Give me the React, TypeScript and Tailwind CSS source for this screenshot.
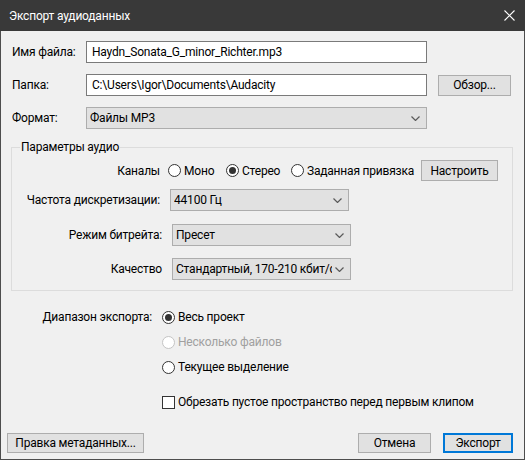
import React from "react";

const font = { fontFamily: 'Roboto, "Noto Sans", sans-serif' };

function Chevron() {
  return (
    <svg width="9" height="5" viewBox="0 0 9 5" className="shrink-0">
      <path d="M0.5 0.5 L4.5 4.5 L8.5 0.5" fill="none" stroke="#5a5a5a" strokeWidth="1.2" />
    </svg>
  );
}

function Radio({ checked, disabled, label }: { checked?: boolean; disabled?: boolean; label: string }) {
  return (
    <div className="flex items-center h-[20px]">
      <div
        className={`w-[13px] h-[13px] rounded-full border bg-white flex items-center justify-center shrink-0 ${
          disabled ? "border-[#c4c4c4]" : "border-[#333333]"
        }`}
      >
        {checked && <div className="w-[7px] h-[7px] rounded-full bg-[#333333]" />}
      </div>
      <span className={`ml-[3px] whitespace-nowrap ${disabled ? "text-[#a0a0a0]" : "text-black"}`}>{label}</span>
    </div>
  );
}

function Select({ value, w, ml }: { value: string; w: string; ml?: string }) {
  return (
    <div className={`${w} ${ml ?? ""} h-[22px] border border-[#adadad] bg-[#e1e1e1] flex items-center pl-[3px] pr-[6px] shrink-0`}>
      <span className="flex-1 overflow-hidden whitespace-nowrap">{value}</span>
      <span className="ml-[3px]"><Chevron /></span>
    </div>
  );
}

export default function App() {
  return (
    <div style={font} className="w-[525px] h-[460px] bg-[#f0f0f0] text-[12px] tracking-[-0.2px] text-black flex flex-col overflow-hidden">
      <div className="h-[31px] bg-[#393939] flex items-center pl-[9px] pr-[10px] shrink-0">
        <span className="text-white flex-1">Экспорт аудиоданных</span>
        <svg width="11" height="11" viewBox="0 0 11 11">
          <path d="M0.5 0.5 L10.5 10.5 M10.5 0.5 L0.5 10.5" stroke="#ffffff" strokeWidth="1.1" />
        </svg>
      </div>
      <div className="flex-1 border-x border-b border-[#4d4d4d] flex flex-col">
        <div className="flex items-center h-[22px] mt-[10px]">
          <div className="w-[85px] pl-[11px]">Имя файла:</div>
          <div className="w-[341px] h-[22px] border border-[#7a7a7a] bg-white flex items-center pl-[5px]">
            Haydn_Sonata_G_minor_Richter.mp3
          </div>
        </div>
        <div className="flex items-center h-[22px] mt-[11px]">
          <div className="w-[85px] pl-[11px]">Папка:</div>
          <div className="w-[341px] h-[22px] border border-[#7a7a7a] bg-white flex items-center pl-[5px]">
            C:\Users\Igor\Documents\Audacity
          </div>
          <div className="ml-[11px] w-[73px] h-[21px] border border-[#adadad] bg-[#e1e1e1] flex items-center justify-center">
            Обзор...
          </div>
        </div>
        <div className="flex items-center h-[22px] mt-[11px]">
          <div className="w-[85px] pl-[11px]">Формат:</div>
          <Select value="Файлы MP3" w="w-[341px]" />
        </div>

        <div className="relative ml-[10px] mt-[18px] w-[502px] h-[144px] border border-[#dcdcdc] flex flex-col">
          <div className="absolute left-[8px] top-[-9px] h-[16px] leading-[16px] px-[1px] bg-[#f0f0f0]">Параметры аудио</div>
          <div className="flex items-center h-[21px] mt-[12px]">
            <div className="w-[148px] text-right">Каналы</div>
            <div className="ml-[8px] w-[58px]"><Radio label="Моно" /></div>
            <div className="w-[65px]"><Radio label="Стерео" checked /></div>
            <div className="w-[130px]"><Radio label="Заданная привязка" /></div>
            <div className="w-[77px] h-[21px] border border-[#adadad] bg-[#e1e1e1] flex items-center justify-center">
              Настроить
            </div>
          </div>
          <div className="flex items-center h-[22px] mt-[8px]">
            <div className="w-[148px] text-right">Частота дискретизации:</div>
            <Select value="44100 Гц" w="w-[179px]" ml="ml-[10px]" />
          </div>
          <div className="flex items-center h-[22px] mt-[13px]">
            <div className="w-[150px] text-right">Режим битрейта:</div>
            <Select value="Пресет" w="w-[179px]" ml="ml-[10px]" />
          </div>
          <div className="flex items-center h-[22px] mt-[12px]">
            <div className="w-[150px] text-right">Качество</div>
            <Select value="Стандартный, 170-210 кбит/с" w="w-[179px]" ml="ml-[10px]" />
          </div>
        </div>

        <div className="flex items-center h-[20px] mt-[16px]">
          <div className="w-[151px] text-right">Диапазон экспорта:</div>
          <div className="ml-[10px]"><Radio label="Весь проект" checked /></div>
        </div>
        <div className="pl-[161px] mt-[5px]"><Radio label="Несколько файлов" disabled /></div>
        <div className="pl-[161px] mt-[5px]"><Radio label="Текущее выделение" /></div>
        <div className="pl-[161px] mt-[15px] flex items-center h-[20px]">
          <div className="w-[13px] h-[13px] border border-[#333333] bg-white shrink-0" />
          <span className="ml-[3px] whitespace-nowrap">Обрезать пустое пространство перед первым клипом</span>
        </div>

        <div className="flex items-center mt-[21px] h-[20px]">
          <div className="ml-[6px] w-[137px] h-[20px] border border-[#adadad] bg-[#e1e1e1] flex items-center justify-center">
            Правка метаданных...
          </div>
          <div className="flex-1" />
          <div className="w-[73px] h-[20px] border border-[#adadad] bg-[#e1e1e1] flex items-center justify-center">
            Отмена
          </div>
          <div className="ml-[12px] mr-[11px] w-[70px] h-[20px] border-2 border-[#0078d7] bg-[#e1e1e1] flex items-center justify-center">
            Экспорт
          </div>
        </div>
      </div>
    </div>
  );
}
